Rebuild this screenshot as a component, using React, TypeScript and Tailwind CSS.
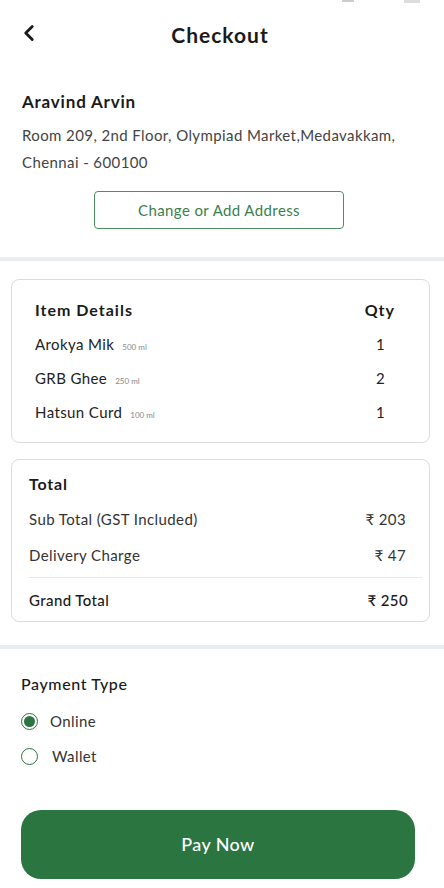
import { ChevronLeft } from 'lucide-react';

const items = [
    { name: 'Arokya Mik', size: '500 ml', qty: 1 },
    { name: 'GRB Ghee', size: '250 ml', qty: 2 },
    { name: 'Hatsun Curd', size: '100 ml', qty: 1 },
];

export default function App() {
    return (
        <div className="w-[444px] h-[888px] bg-white text-[#1a1a1a] overflow-hidden tracking-[0.4px]" style={{ fontFamily: 'Lato, "Noto Sans", sans-serif' }}>
            {/* status bar remnants */}
            <div className="h-[4px] flex justify-end gap-[50px] pr-[24px]">
                <div className="w-[12px] h-[2px] bg-[#ccc]" />
                <div className="w-[16px] h-[3px] bg-[#ddd]" />
            </div>

            <header className="relative flex items-center justify-center h-[62px]">
                <ChevronLeft className="absolute left-[16px] top-[16px] w-[26px] h-[26px]" strokeWidth={2.6} />
                <h1 className="text-[21px] font-bold tracking-[1px] ml-[-4px]">Checkout</h1>
            </header>

            <section className="px-[22px] pt-[24px] pb-[28px]">
                <div className="text-[17px] font-bold leading-[24px] tracking-[0.8px]">Aravind Arvin</div>
                <p className="mt-[8px] text-[15px] leading-[27px] text-[#444]">
                    Room 209, 2nd Floor, Olympiad Market,Medavakkam,<br />Chennai - 600100
                </p>
                <div className="flex justify-center mt-[15px]">
                    <button className="w-[250px] h-[38px] border border-[#4b9160] rounded-[4px] text-[15px] text-[#3b7f4d] ml-[-6px]">
                        Change or Add Address
                    </button>
                </div>
            </section>

            <div className="h-[4px] bg-[#e9edf3]" />

            <div className="pl-[11px] pr-[14px] pt-[18px] pb-[23px] flex flex-col gap-[16px] bg-white">
                <div className="border border-[#dcdcdc] rounded-[8px] h-[164px] pl-[23px] pr-[34px] pt-[18px]">
                    <div className="flex justify-between items-center text-[16px] font-bold tracking-[1px]">
                        <span>Item Details</span>
                        <span>Qty</span>
                    </div>
                    <div className="mt-[12px] flex flex-col gap-[13px]">
                        {items.map((it) => (
                            <div key={it.name} className="flex justify-between items-center h-[21px]">
                                <span className="text-[15px] text-[#222]">
                                    {it.name}
                                    <span className="ml-[8px] text-[8px] text-[#888] tracking-normal">{it.size}</span>
                                </span>
                                <span className="text-[15px] text-[#222] mr-[10px]">{it.qty}</span>
                            </div>
                        ))}
                    </div>
                </div>

                <div className="border border-[#dcdcdc] rounded-[8px] h-[163px] pl-[17px] pr-[7px] pt-[13px]">
                    <div className="text-[16px] font-bold leading-[22px] tracking-[0.8px]">Total</div>
                    <div className="mt-[14px] flex justify-between text-[15px] text-[#333] pr-[16px] leading-[20px]">
                        <span>Sub Total (GST Included)</span>
                        <span>₹ 203</span>
                    </div>
                    <div className="mt-[16px] flex justify-between text-[15px] text-[#333] pr-[16px] leading-[20px]">
                        <span>Delivery Charge</span>
                        <span>₹ 47</span>
                    </div>
                    <div className="mt-[12px] h-px bg-[#e3e8ef]" />
                    <div className="mt-[12px] flex justify-between text-[15px] font-medium pr-[14px] leading-[20px]">
                        <span>Grand Total</span>
                        <span>₹ 250</span>
                    </div>
                </div>
            </div>

            <div className="h-[4px] bg-[#e9edf3]" />

            <section className="px-[21px] pt-[24px]">
                <div className="text-[16px] font-medium text-[#1a1a1a] leading-[22px] tracking-[0.6px]">Payment Type</div>
                <div className="mt-[16px] flex items-center gap-[12px] h-[20px]">
                    <span className="w-[17px] h-[17px] rounded-full border-[1.5px] border-[#2b7541] flex items-center justify-center">
                        <span className="w-[11px] h-[11px] rounded-full bg-[#2b7541]" />
                    </span>
                    <span className="text-[15px] text-[#333]">Online</span>
                </div>
                <div className="mt-[15px] flex items-center gap-[14px] h-[20px]">
                    <span className="w-[17px] h-[17px] rounded-full border-[1.5px] border-[#2b7541]" />
                    <span className="text-[15px] text-[#333]">Wallet</span>
                </div>
                <button className="mt-[44px] w-[394px] h-[69px] rounded-[20px] bg-[#2b7541] text-white text-[18px] font-medium">
                    Pay Now
                </button>
            </section>
        </div>
    );
}
